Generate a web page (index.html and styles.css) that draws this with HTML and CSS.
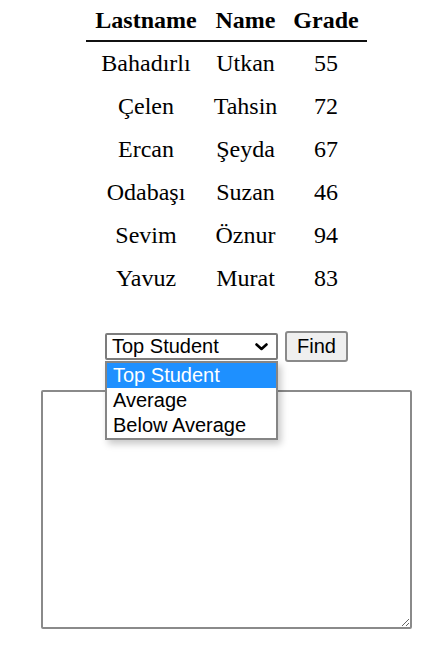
FILE: index.html
```html
<!DOCTYPE html>
<html lang="tr">
<head>
<meta charset="utf-8">
<title>Students</title>
<link rel="stylesheet" href="styles.css">
</head>
<body>
<div class="page">
  <table class="grades">
    <thead>
      <tr><th>Lastname</th><th>Name</th><th>Grade</th></tr>
    </thead>
    <tbody>
      <tr><td>Bahadırlı</td><td>Utkan</td><td>55</td></tr>
      <tr><td>Çelen</td><td>Tahsin</td><td>72</td></tr>
      <tr><td>Ercan</td><td>Şeyda</td><td>67</td></tr>
      <tr><td>Odabaşı</td><td>Suzan</td><td>46</td></tr>
      <tr><td>Sevim</td><td>Öznur</td><td>94</td></tr>
      <tr><td>Yavuz</td><td>Murat</td><td>83</td></tr>
    </tbody>
  </table>

  <div class="controls">
    <div class="select-wrap">
      <div class="select">
        <span class="select-value">Top Student</span>
        <svg class="chevron" width="13" height="8" viewBox="0 0 13 8"><polyline points="1.5,1.5 6.5,6 11.5,1.5" fill="none" stroke="#000" stroke-width="2.6" stroke-linecap="round" stroke-linejoin="round"/></svg>
      </div>
      <ul class="dropdown">
        <li class="option selected">Top Student</li>
        <li class="option">Average</li>
        <li class="option">Below Average</li>
      </ul>
    </div>
    <button class="find" type="button">Find</button>
  </div>

  <textarea class="output"></textarea>
</div>
</body>
</html>
```

FILE: styles.css
```css
html, body {
  margin: 0;
  padding: 0;
  background: #fff;
}

.page {
  padding-left: 7px;
  display: flex;
  flex-direction: column;
  align-items: center;
  font-family: "Liberation Serif", "Times New Roman", serif;
  color: #000;
}

.grades {
  border-collapse: collapse;
  font-size: 24px;
}

.grades th,
.grades td {
  padding: 0;
  text-align: center;
}

.grades th {
  height: 40px;
  font-weight: bold;
  border-bottom: 2px solid #111;
}

.grades td {
  height: 43px;
}

.grades th:nth-child(1) { width: 120px; }
.grades th:nth-child(2) { width: 79px; }
.grades th:nth-child(3) { width: 82px; }

.controls {
  margin-top: 31px;
  display: flex;
  align-items: center;
  gap: 7px;
  font-family: "Liberation Sans", Arial, sans-serif;
  font-size: 20px;
}

.select-wrap {
  position: relative;
}

.select {
  box-sizing: border-box;
  width: 173px;
  height: 27px;
  border: 2px solid #7c7c7c;
  border-radius: 2px;
  background: #fff;
  display: flex;
  align-items: center;
  justify-content: space-between;
  padding: 0 8px 0 5px;
  line-height: 23px;
}

.chevron {
  display: block;
}

.dropdown {
  position: absolute;
  left: 0;
  top: 28px;
  box-sizing: border-box;
  width: 173px;
  margin: 0;
  padding: 0;
  list-style: none;
  background: #fff;
  border: 2px solid #858585;
  box-shadow: 3px 4px 7px rgba(0, 0, 0, 0.22);
  z-index: 2;
}

.option {
  height: 25px;
  line-height: 25px;
  padding-left: 6px;
  white-space: nowrap;
}

.option.selected {
  background: #1e90ff;
  color: #fff;
}

.find {
  box-sizing: border-box;
  width: 63px;
  height: 31px;
  border: 2px solid #8a8a8a;
  border-radius: 3px;
  background: #efefef;
  font-family: "Liberation Sans", Arial, sans-serif;
  font-size: 20px;
  color: #000;
  padding: 0;
}

.output {
  display: block;
  box-sizing: border-box;
  margin: 28px 0 0 0;
  width: 371px;
  height: 239px;
  border: 2px solid #8a8a8a;
  border-radius: 2px;
  background: #fff;
}
```
